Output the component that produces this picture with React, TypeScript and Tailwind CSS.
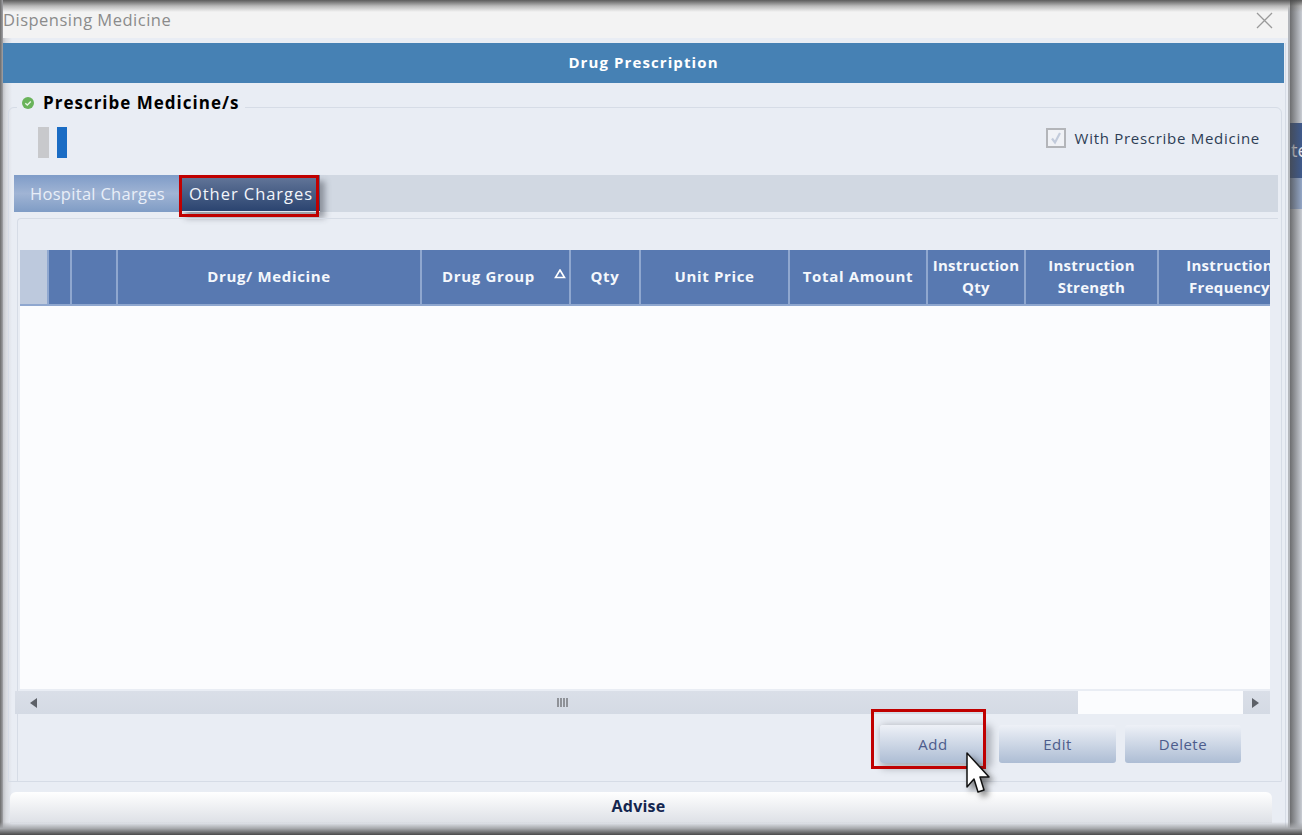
const font = { fontFamily: '"Open Sans", "Noto Sans", sans-serif' };

const cols = [
  { w: 'w-[29px]', bg: 'bg-[#bdc9dd]', label: [] as string[] },
  { w: 'w-[23px]', bg: '', label: [] as string[] },
  { w: 'w-[46px]', bg: '', label: [] as string[] },
  { w: 'w-[304px]', bg: '', label: ['Drug/ Medicine'] },
  { w: 'w-[149px]', bg: 'pr-[14px]', label: ['Drug Group'], sort: true },
  { w: 'w-[70px]', bg: '', label: ['Qty'] },
  { w: 'w-[149px]', bg: '', label: ['Unit Price'] },
  { w: 'w-[138px]', bg: '', label: ['Total Amount'] },
  { w: 'w-[98px]', bg: 'tracking-[0.3px]', label: ['Instruction', 'Qty'] },
  { w: 'w-[133px]', bg: 'tracking-[0.3px]', label: ['Instruction', 'Strength'] },
  { w: 'w-[143px]', bg: 'tracking-[0.3px]', label: ['Instruction', 'Frequency'] },
];

function Pushbutton({ label, width }: { label: string; width: string }) {
  return (
    <div className={`${width} h-[38px] rounded-[3px] bg-gradient-to-b from-[#eef1f7] to-[#adbdd4] flex items-center justify-center text-[15px] tracking-[0.5px] text-[#4d5c8c]`}>
      {label}
    </div>
  );
}

export default function App() {
  return (
    <div style={font} className="relative w-[1302px] h-[835px] overflow-hidden flex bg-[#c8ccd3]">
      <div className="w-[1290px] h-full shrink-0 flex flex-col bg-[linear-gradient(90deg,#a9abaf_0px,#d9dbe0_6px,#e9edf4_12px,#e9edf4_100%)] border-r-2 border-[#b4b7bc] rounded-tr-[8px]">
        {/* Title bar */}
        <div className="h-[38px] shrink-0 bg-[#f3f3f3] flex items-center justify-between pl-[3px] pr-[15px] pt-[2px] text-[16.5px] tracking-[0.5px] text-[#8b8b8b]">
          <span>Dispensing Medicine</span>
          <svg width="17" height="17" viewBox="0 0 17 17" stroke="#9a9a9a" strokeWidth="1.3" fill="none">
            <path d="M1 1 L16 16 M16 1 L1 16" />
          </svg>
        </div>
        {/* Header band */}
        <div className="mt-[5px] ml-[3px] w-[1281px] h-[40px] shrink-0 bg-[#4681b4] flex items-center justify-center pb-[2px] text-[15px] tracking-[1.1px] font-bold text-white">
          Drug Prescription
        </div>

        {/* Group box */}
        <div className="relative mt-[24px] ml-[8px] w-[1274px] h-[675px] shrink-0 border border-[#d6dce6] rounded-tr-[6px] rounded-tl-[6px] flex flex-col">
          <div className="absolute left-[8px] top-[-18px] h-[26px] pl-[4px] pr-[6px] bg-[#e9edf4] flex items-center gap-[8px] text-[17px] tracking-[1px] font-bold text-black">
            <svg width="14" height="14" viewBox="0 0 14 14">
              <circle cx="7" cy="7" r="6" fill="#69b35a" />
              <path d="M4.3 7.2 L6.3 9 L9.8 5.4" stroke="#e8f5e4" strokeWidth="1.4" fill="none" />
            </svg>
            <span>Prescribe Medicine/s</span>
          </div>

          {/* Top row */}
          <div className="h-[67px] shrink-0 flex items-start justify-between pt-[19px] pl-[29px] pr-[21px]">
            <div className="flex gap-[8px]">
              <div className="w-[11px] h-[31px] bg-[#c8c9cc]" />
              <div className="w-[10px] h-[31px] bg-[#1a6cc4]" />
            </div>
            <div className="flex items-center gap-[9px] text-[15px] tracking-[0.72px] text-[#2d3d55]">
              <div className="w-[20px] h-[20px] border-[2px] border-[#b3b5b9] bg-[#f0f2f6] flex items-center justify-center">
                <svg width="14" height="14" viewBox="0 0 14 14" fill="none" stroke="#c2cbdb" strokeWidth="2.2">
                  <path d="M3 7.5 L6 11.5 L11 2" />
                </svg>
              </div>
              <span>With Prescribe Medicine</span>
            </div>
          </div>

          {/* Tab strip */}
          <div className="ml-[5px] w-[1264px] h-[37px] shrink-0 bg-[#d1d8e2] flex text-[16.5px]">
            <div className="w-[166px] h-full bg-gradient-to-b from-[#7f9cc8] via-[#a0b4d4] to-[#7f9cc5] flex items-center pl-[16px] pt-[2px] text-[#e8eef8] tracking-[0.3px]">
              Hospital Charges
            </div>
            <div className="w-[140px] h-full bg-gradient-to-b from-[#66799b] to-[#2b4470] border-b border-[#dfe6f0] flex items-center pl-[9px] pt-[2px] font-medium tracking-[0.95px] text-[#f2f5fa] shadow-[5px_6px_6px_rgba(60,65,75,0.45)]">
              Other Charges
            </div>
          </div>

          {/* Inner panel */}
          <div className="mt-[6px] ml-[8px] w-[1261px] flex-1 border-t border-l border-[#d6dce6] rounded-tl-[4px] flex flex-col pt-[31px] pl-[2px]">
            <div className="w-[1250px] h-[56px] shrink-0 flex overflow-hidden bg-[#5879b1] border-b-2 border-[#8fa7cf] text-[15px] tracking-[0.65px] font-bold text-[#f4f7fc] leading-[22px]">
              {cols.map((c, i) => (
                <div
                  key={i}
                  className={`${c.w} ${c.bg} shrink-0 relative flex flex-col items-center justify-center pb-[2px] whitespace-nowrap border-r-2 border-[#8fa7cf]`}
                >
                  {c.label.map((t) => (
                    <span key={t}>{t}</span>
                  ))}
                  {c.sort && (
                    <svg className="absolute right-[3px] top-[19px]" width="12" height="10" viewBox="0 0 12 10" fill="none" stroke="#fff" strokeWidth="1.6">
                      <path d="M6 1 L10.5 8.5 L1.5 8.5 Z" />
                    </svg>
                  )}
                </div>
              ))}
            </div>
            <div className="w-[1250px] h-[383px] shrink-0 bg-[#fbfcfe]" />
            {/* Scrollbar */}
            <div className="-ml-[5px] mt-[2px] w-[1255px] h-[23px] shrink-0 bg-gradient-to-b from-[#dadfe8] to-[#d4dae4] flex items-center">
              <svg className="ml-[15px]" width="7" height="10" viewBox="0 0 7 10" fill="#5d6168">
                <path d="M7 0 V10 L0 5 Z" />
              </svg>
              <div className="ml-[520px] flex gap-[1px]">
                {[0, 1, 2, 3].map((i) => (
                  <div key={i} className="w-[2px] h-[9px] bg-[#8f9298]" />
                ))}
              </div>
              <div className="ml-[510px] w-[165px] h-full bg-[#fbfcfe]" />
              <svg className="ml-[9px]" width="7" height="10" viewBox="0 0 7 10" fill="#5d6168">
                <path d="M0 0 V10 L7 5 Z" />
              </svg>
            </div>
            {/* Buttons */}
            <div className="mt-[11px] flex justify-end gap-[9px] pr-[37px]">
              <div className="mr-[4px] shadow-[3px_3px_7px_3px_rgba(90,95,105,0.4)] rounded-[3px]">
                <Pushbutton label="Add" width="w-[106px]" />
              </div>
              <Pushbutton label="Edit" width="w-[117px]" />
              <Pushbutton label="Delete" width="w-[116px]" />
            </div>
          </div>
        </div>

        {/* Advise bar */}
        <div className="mt-[10px] ml-[10px] w-[1262px] h-[31px] shrink-0 rounded-t-[6px] bg-gradient-to-b from-[#ffffff] to-[#dde0e6] flex items-center justify-center pr-[5px] pb-[3px] text-[16px] tracking-[0.2px] font-bold text-[#14264f]">
          Advise
        </div>
      </div>

      {/* Area behind the window */}
      <div className="flex-1 flex flex-col">
        <div className="h-[123px] bg-[#c8ccd3]" />
        <div className="h-[55px] bg-[#3f5a8c] flex items-center text-[18px] text-[#e6ebf4] overflow-hidden whitespace-nowrap pl-[1px]">te</div>
        <div className="h-[31px] bg-[#93a6c6]" />
        <div className="flex-1 bg-[#c8ccd3]" />
      </div>

      {/* Window shadow edges */}
      <div className="absolute left-0 top-0 w-full h-[12px] bg-gradient-to-b from-[#5c5c5c] via-[#b9b9b9] to-transparent pointer-events-none" />
      <div className="absolute left-0 top-0 h-full w-[3px] bg-gradient-to-r from-[#6b6b6b] to-[#a3a4a8] pointer-events-none" />
      <div className="absolute left-[1285px] top-[43px] bottom-0 w-[1px] bg-[#d6dce6] pointer-events-none" />
      <div className="absolute left-[1290px] top-0 h-full w-[12px] bg-gradient-to-r from-[rgba(70,70,70,0.7)] to-transparent pointer-events-none" />
      <div className="absolute left-0 bottom-0 w-full h-[13px] bg-gradient-to-t from-[#4a4a4a] via-[#a6a8ac] to-transparent pointer-events-none" />

      {/* Annotations */}
      <div className="absolute left-[179px] top-[175px] w-[140px] h-[42px] border-[3px] border-[#c00000]" />
      <div className="absolute left-[871px] top-[709px] w-[115px] h-[60px] border-[3px] border-[#c00000]" />
      <svg className="absolute left-[964px] top-[750px] drop-shadow-[4px_4px_3px_rgba(40,40,40,0.6)]" width="28" height="46" viewBox="0 0 28 46">
        <path d="M3 3 V37 L10 29 L14 42 L20 40 L16 27 L25 27 Z" fill="#fff" stroke="#111" strokeWidth="1.5" strokeLinejoin="round" />
      </svg>
    </div>
  );
}
